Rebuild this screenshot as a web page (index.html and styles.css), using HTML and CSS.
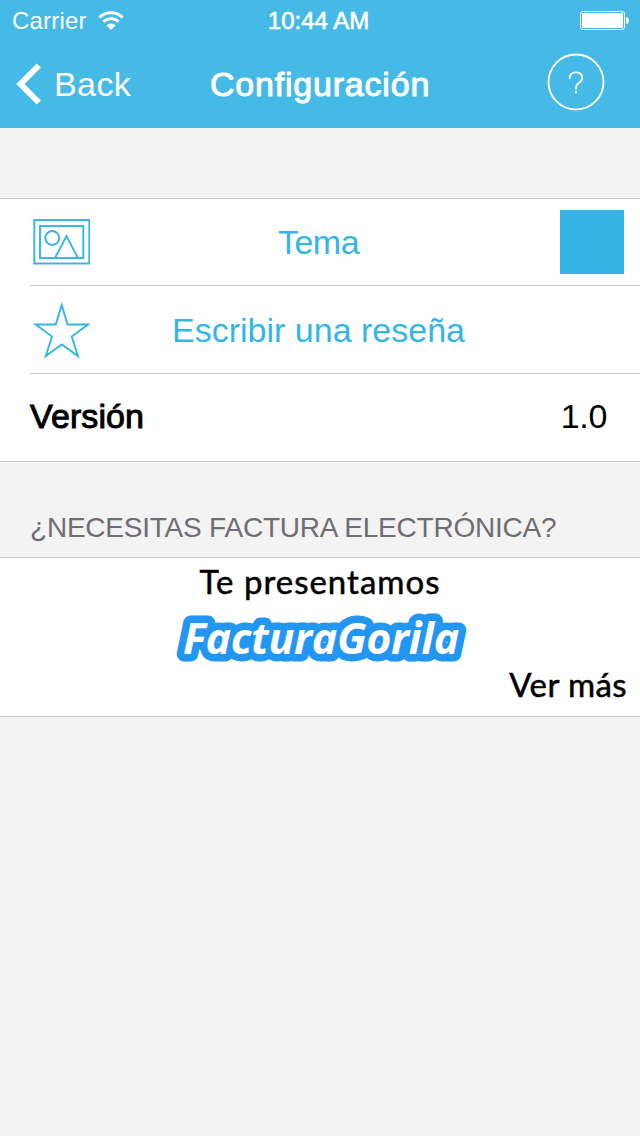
FILE: index.html
```html
<!DOCTYPE html>
<html lang="es">
<head>
<meta charset="utf-8">
<title>Configuración</title>
<link rel="stylesheet" href="styles.css">
</head>
<body>
<header class="header">
  <div class="status">
    <div class="status-left">
      <span class="carrier">Carrier</span>
      <svg class="wifi" width="26" height="20" viewBox="0 0 26 20" fill="none" stroke="#fff">
        <path d="M1.400 6.400A16.500 16.500 0 0 1 24.600 6.400" stroke-width="3"/>
        <path d="M5.400 10.800A10.800 10.800 0 0 1 20.600 10.800" stroke-width="2.800"/>
        <path d="M8.400 14.500A6.500 6.500 0 0 1 17.600 14.500L13 19Z" fill="#fff" stroke="none"/>
      </svg>
    </div>
    <span class="time">10:44 AM</span>
    <div class="status-right">
      <svg width="50" height="20" viewBox="0 0 50 20">
        <rect x=".5" y=".5" width="44" height="18" rx="2.5" fill="none" stroke="#fff"/>
        <rect x="2" y="2" width="41" height="15" rx="1" fill="#fff"/>
        <path d="M46 6Q49 6.500 49 9.500T46 13Z" fill="#fff"/>
      </svg>
    </div>
  </div>
  <nav class="nav">
    <div class="back">
      <svg width="26" height="42" viewBox="0 0 26 42" fill="none" stroke="#fff" stroke-width="6"><path d="M22.800 2.500L4.500 21L22.800 39.500"/></svg>
      <span class="back-label">Back</span>
    </div>
    <h1 class="title">Configuración</h1>
    <div class="help">
      <svg width="58" height="58" viewBox="0 0 58 58" fill="none" stroke="#fff">
        <circle cx="29" cy="29" r="27.500" stroke-width="1.900"/>
        <path d="M22.700 26V25C22.700 21.400 25 19.300 29 19.300S35.300 21.600 35.300 25C35.300 30 29 29.500 29 34.500V36M29 37.500V40.500" stroke-width="1.800"/>
      </svg>
    </div>
  </nav>
</header>
<main>
  <section class="group">
    <div class="row">
      <svg class="icon" width="60" height="60" viewBox="0 0 60 60" fill="none" stroke="#34b5e6" stroke-width="1.900">
        <rect x="4.300" y="8" width="55" height="43.500"/>
        <rect x="10" y="14" width="43.300" height="32"/>
        <circle cx="22.300" cy="26" r="7"/>
        <path d="M25 46L36.500 24L48 46"/>
      </svg>
      <span class="action tema">Tema</span>
      <div class="swatch"></div>
    </div>
    <div class="row">
      <svg class="icon" width="60" height="60" viewBox="0 0 60 60" fill="none" stroke="#34b5e6" stroke-width="1.900">
        <path d="M31.700 5L37.600 24.500H58L41.700 36.500L48 56L31.700 44.500L15.700 56L22 36.500L5.700 24.500H25.800Z"/>
      </svg>
      <span class="action review">Escribir una reseña</span>
    </div>
    <div class="row">
      <span class="version">Versión</span>
      <span class="number">1.0</span>
    </div>
  </section>
  <h2 class="section-title">¿NECESITAS FACTURA ELECTRÓNICA?</h2>
  <section class="promo">
    <p class="intro">Te presentamos</p>
    <svg class="logo" width="300" height="68" viewBox="0 0 300 68">
      <text class="logo-text" x="13" y="49.500">FacturaGorila</text>
    </svg>
    <p class="more">Ver más</p>
  </section>
</main>
</body>
</html>
```
FILE: styles.css
```css
* { box-sizing: border-box; }
body { margin: 0; background: #f3f3f3; color: #000; font-family: "Liberation Sans", Arial, sans-serif; font-size: 34px; }
svg { display: block; flex: none; }
h1, h2, p { margin: 0; font-weight: 400; }
span, h1, h2, p { white-space: nowrap; }
.header { height: 128px; background: #45bae7; color: #fff; }
.status { height: 40px; display: grid; grid-template-columns: 1fr auto 1fr; align-items: center; padding: 0 10px; }
.status-left { display: flex; gap: 11px; align-items: center; padding-left: 2px; }
.carrier { font-size: 24px; letter-spacing: .2px; line-height: 40px; padding-top: 1px; }
.time { font-size: 24px; -webkit-text-stroke: .6px #fff; line-height: 40px; padding-right: 3px; }
.status-right { display: flex; justify-content: flex-end; }
.nav { height: 88px; display: grid; grid-template-columns: 1fr auto 1fr; align-items: center; padding: 0 35px 0 16px; }
.back { display: flex; align-items: center; gap: 12px; }
.back-label { line-height: 88px; letter-spacing: .4px; }
.title { font-size: 34px; -webkit-text-stroke: 1px #fff; letter-spacing: .8px; line-height: 88px; margin: 0 -9px 0 10px; }
.help { display: flex; justify-content: flex-end; padding-bottom: 4px; }
.group { margin-top: 70px; background: #fff; border-top: 1px solid #c8c7cc; border-bottom: 1px solid #c8c7cc; }
.row { height: 88px; margin-left: 30px; border-bottom: 1px solid #c8c7cc; display: grid; grid-template-columns: 64px 1fr 96px; align-items: center; }
.row:first-child { height: 87px; }
.row:last-child { height: 87px; border-bottom: 0; grid-template-columns: 1fr auto; padding: 0 33px 2px 0; }
.action { color: #34b5e6; text-align: center; }
.tema { letter-spacing: -.5px; padding-right: 1px; }
.review { padding: 2px 1px 0 0; }
.swatch { width: 64px; height: 64px; background: #34b5e6; margin-left: 16px; }
.version { -webkit-text-stroke: 1px #000; letter-spacing: .1px; }
.number { letter-spacing: -.3px; }
.section-title { height: 95px; padding: 49px 30px 0; font-size: 28px; line-height: 34px; color: #6d6d72; letter-spacing: -.22px; }
.promo { height: 160px; background: #fff; border-top: 1px solid #c8c7cc; border-bottom: 1px solid #c8c7cc; font-family: Lato, sans-serif; font-size: 33px; display: flex; flex-direction: column; align-items: center; }
.intro, .more { line-height: 46px; -webkit-text-stroke: .5px #000; letter-spacing: 1px; }
.logo { margin-bottom: -8px; }
.more { align-self: flex-end; padding-right: 13px; line-height: 40px; letter-spacing: .4px; }
.logo-text { font: italic 700 43px "Open Sans", sans-serif; letter-spacing: -.35px; fill: #fff; stroke: #2196f3; stroke-width: 15px; stroke-linejoin: round; paint-order: stroke; }
```
